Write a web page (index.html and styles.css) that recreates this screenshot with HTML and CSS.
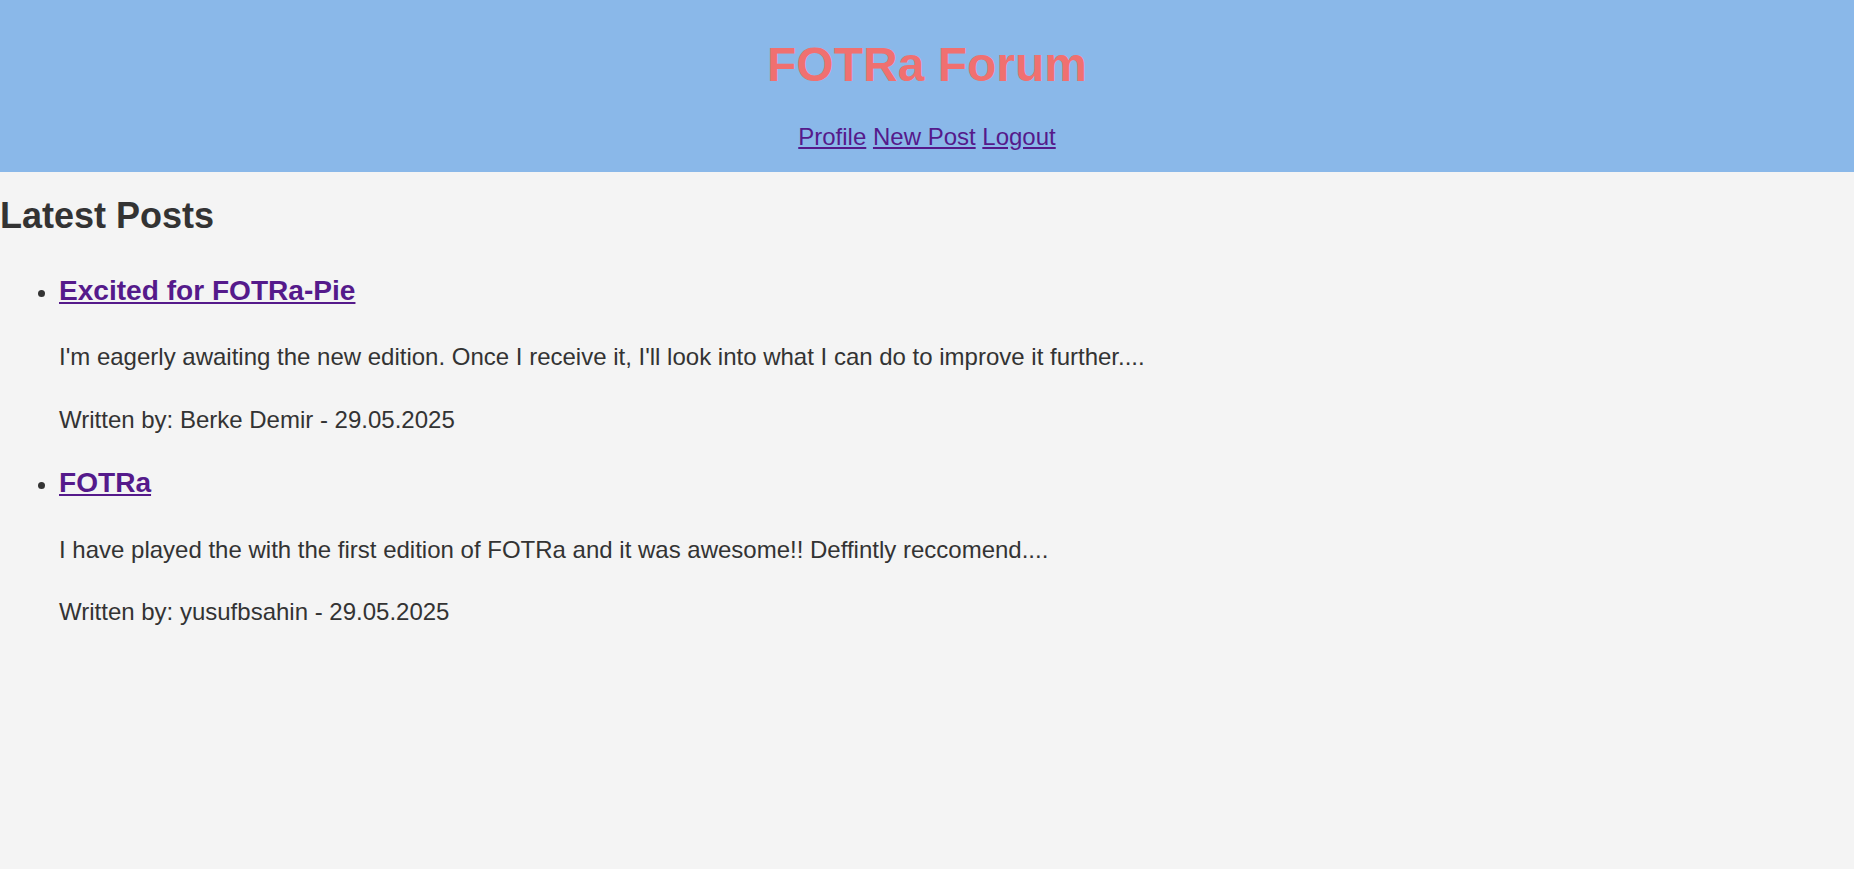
FILE: index.html
```html
<!DOCTYPE html>
<html lang="en">
<head>
<meta charset="utf-8">
<title>FOTRa Forum</title>
<link rel="stylesheet" href="styles.css">
</head>
<body>
<header class="site-header">
  <h1 class="site-title">FOTRa Forum</h1>
  <nav class="site-nav"><a href="#">Profile</a> <a href="#">New Post</a> <a href="#">Logout</a></nav>
</header>
<main class="content">
  <h2 class="section-title">Latest Posts</h2>
  <ul class="post-list">
    <li class="post">
      <h3 class="post-title"><a href="#">Excited for FOTRa-Pie</a></h3>
      <p class="post-text">I'm eagerly awaiting the new edition. Once I receive it, I'll look into what I can do to improve it further....</p>
      <p class="post-meta">Written by: Berke Demir - 29.05.2025</p>
    </li>
    <li class="post">
      <h3 class="post-title"><a href="#">FOTRa</a></h3>
      <p class="post-text">I have played the with the first edition of FOTRa and it was awesome!! Deffintly reccomend....</p>
      <p class="post-meta">Written by: yusufbsahin - 29.05.2025</p>
    </li>
  </ul>
</main>
</body>
</html>
```
FILE: styles.css
```css
html, body {
  margin: 0;
  padding: 0;
}
body {
  background: #f4f4f4;
  color: #333333;
  font-family: "Liberation Sans", Arial, sans-serif;
  font-size: 24px;
}
a {
  color: #551a8b;
}
.site-header {
  background: #8ab8e9;
  text-align: center;
  padding: 37px 0 21px;
}
.site-title {
  margin: 0 0 31px;
  font-size: 48px;
  font-weight: bold;
  line-height: normal;
  color: #f07070;
}
.site-nav {
  font-size: 24px;
  line-height: normal;
  margin: 0;
}
.content {
  padding: 0;
}
.section-title {
  margin: 23px 0 0;
  font-size: 36px;
  font-weight: bold;
  line-height: normal;
}
.post-list {
  margin: 37.6px 0 0;
  padding-left: 59px;
  list-style: disc;
}
.post-title {
  margin: 28px 0 31.7px;
  font-size: 28.08px;
  font-weight: bold;
  line-height: normal;
}
.post-text,
.post-meta {
  margin: 24px 0;
  line-height: 1.6;
}
```
